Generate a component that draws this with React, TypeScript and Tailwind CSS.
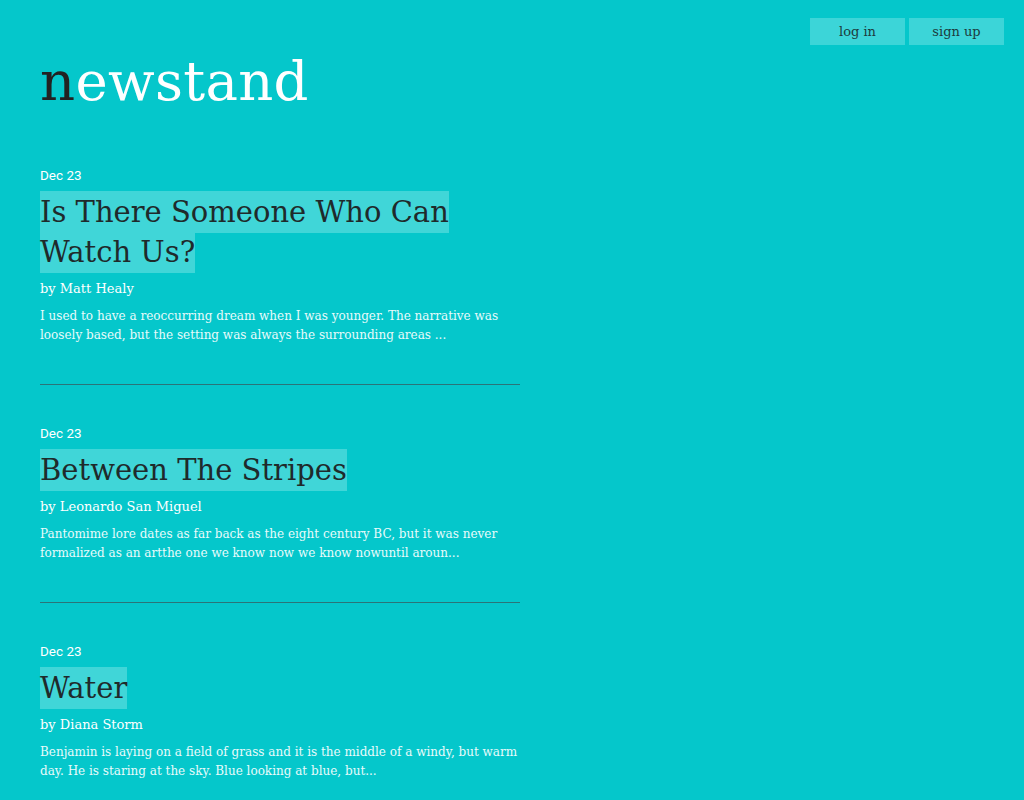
const posts = [
  {
    date: 'Dec 23',
    title: 'Is There Someone Who Can Watch Us?',
    author: 'Matt Healy',
    excerpt:
      'I used to have a reoccurring dream when I was younger. The narrative was loosely based, but the setting was always the surrounding areas ...',
  },
  {
    date: 'Dec 23',
    title: 'Between The Stripes',
    author: 'Leonardo San Miguel',
    excerpt:
      'Pantomime lore dates as far back as the eight century BC, but it was never formalized as an artthe one we know now we know nowuntil aroun...',
  },
  {
    date: 'Dec 23',
    title: 'Water',
    author: 'Diana Storm',
    excerpt:
      'Benjamin is laying on a field of grass and it is the middle of a windy, but warm day. He is staring at the sky. Blue looking at blue, but...',
  },
];

const slab = "font-['DejaVu_Serif',_'Liberation_Serif',_serif]";

export default function App() {
  return (
    <div className={`min-h-screen bg-[#05c7cb] ${slab}`}>
      {/* top nav */}
      <div className="flex justify-end gap-1 pt-[18px] pr-5">
        <button className="w-[95px] h-[27px] bg-[#3cd5d8] text-[13px] text-[#1d3b3d]">log in</button>
        <button className="w-[95px] h-[27px] bg-[#3cd5d8] text-[13px] text-[#1d3b3d]">sign up</button>
      </div>

      <div className="px-10">
        <h1 className="mt-[2px] text-[54.5px] leading-[68px] font-light tracking-[0.3px] text-white">
          <span className="text-[#222]">n</span>ewstand
        </h1>

        <div className="mt-[51px] w-[480px]">
          {posts.map((p, i) => (
            <div key={i}>
              {i > 0 && <div className="h-px bg-[#2b7478] mt-[39px] mb-[39px]" />}
              <div className="font-['Roboto',_sans-serif] text-[13.5px] leading-[18px] text-white">{p.date}</div>
              <h2 className="mt-[8px] text-[29px] leading-[40px] text-[#1f2a2b]">
                <span className="bg-[#40d6d8] [box-decoration-break:clone] [-webkit-box-decoration-break:clone] py-[4px]">{p.title}</span>
              </h2>
              <div className="mt-[8px] text-[13px] leading-[18px] text-white">by {p.author}</div>
              <p className="mt-[9px] text-[12px] leading-[19px] text-[#e8fbfb]">{p.excerpt}</p>
            </div>
          ))}
        </div>
      </div>
    </div>
  );
}
